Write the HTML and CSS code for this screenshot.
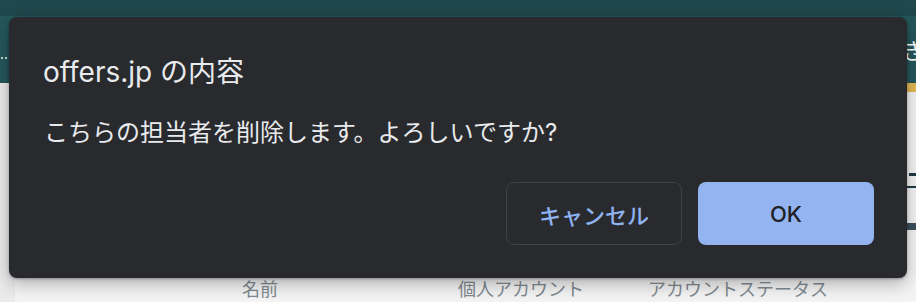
FILE: index.html
```html
<!DOCTYPE html>
<html lang="ja">
<head>
<meta charset="utf-8">
<title>offers.jp</title>
<link rel="stylesheet" href="styles.css">
</head>
<body>
<div class="page">
  <header class="topbar">
    <div class="topstrip"></div>
    <nav class="nav">
      <span class="dots"><i></i><i></i><i></i></span>
      <span class="navitem">き</span>
    </nav>
  </header>
  <div class="accent-row"><div class="gold"></div></div>
  <main class="content">
    <div class="card">
      <div class="heading-row">
        <span class="heading-mark"></span>
      </div>
      <div class="action-row"><span class="action-btn"></span></div>
      <div class="table-head">
        <span class="col col-name">名前</span>
        <span class="col col-account">個人アカウント</span>
        <span class="col col-status">アカウントステータス</span>
      </div>
    </div>
  </main>
</div>

<div class="dialog" role="dialog">
  <h1 class="dialog-title">offers.jp の内容</h1>
  <p class="dialog-message">こちらの担当者を削除します。よろしいですか?</p>
  <div class="dialog-actions">
    <button class="btn btn-cancel">キャンセル</button>
    <button class="btn btn-ok">OK</button>
  </div>
</div>
</body>
</html>
```

FILE: styles.css
```css
html, body {
  margin: 0;
  padding: 0;
}
body {
  width: 916px;
  height: 302px;
  overflow: hidden;
  background: #ebebeb;
  font-family: "Inter", "Noto Sans CJK JP", sans-serif;
}
.page {
  display: flex;
  flex-direction: column;
  height: 302px;
}
.topbar {
  display: flex;
  flex-direction: column;
  height: 90px;
  background: #24575b;
}
.topstrip {
  height: 16px;
  background: #1f484c;
}
.nav {
  flex: 1;
  display: flex;
  align-items: center;
  justify-content: space-between;
}
.dots {
  display: flex;
  gap: 2px;
  margin-left: -3px;
  margin-top: 18px;
}
.dots i {
  width: 2px;
  height: 2px;
  border-radius: 50%;
  background: #ffffff;
}
.navitem {
  color: #ffffff;
  font-size: 22px;
  line-height: 24px;
  margin-right: -8px;
  margin-top: 4px;
}
.accent-row {
  display: flex;
  justify-content: flex-end;
  height: 10px;
}
.gold {
  width: 80px;
  background: #e3b955;
}
.content {
  flex: 1;
  display: flex;
  padding-left: 15px;
}
.card {
  flex: 1;
  background: #f4f4f4;
  display: flex;
  flex-direction: column;
  padding-top: 81px;
}
.heading-row {
  display: flex;
  justify-content: flex-end;
  height: 13px;
  border-bottom: 2px solid #1e3a47;
}
.heading-mark {
  width: 7px;
  height: 3px;
  background: #1e3a47;
}
.action-row {
  display: flex;
  justify-content: flex-end;
  margin-top: 35px;
}
.action-btn {
  width: 120px;
  height: 7px;
  background: #3c505c;
  margin-right: -110px;
}
.table-head {
  display: flex;
  margin-top: 48px;
  padding-left: 227px;
  font-size: 18px;
  color: #7f898f;
  line-height: 24px;
}
.col-name { width: 216px; }
.col-account { width: 190px; }

.dialog {
  position: absolute;
  left: 9px;
  top: 17px;
  width: 898px;
  height: 261px;
  box-sizing: border-box;
  background: #292a2d;
  border-radius: 8px;
  box-shadow: 0 6px 18px rgba(0, 0, 0, 0.28), 0 1px 3px rgba(0, 0, 0, 0.3);
  padding: 39px 33px 0 34px;
  display: flex;
  flex-direction: column;
  color: #e8eaed;
}
.dialog-title {
  margin: 0;
  font-size: 28px;
  font-weight: 400;
  line-height: 32px;
}
.dialog-message {
  margin: 29px 0 0 1px;
  font-size: 24px;
  line-height: 32px;
}
.dialog-actions {
  display: flex;
  justify-content: flex-end;
  gap: 16px;
  margin-top: 33px;
}
.btn {
  width: 176px;
  height: 63px;
  border-radius: 8px;
  font-family: "Inter", "Noto Sans CJK JP", sans-serif;
  font-size: 22px;
  font-weight: 500;
  cursor: pointer;
}
.btn-cancel {
  background: #292a2d;
  border: 1px solid #3f4145;
  color: #8fb2f1;
}
.btn-ok {
  background: #93b4f1;
  border: none;
  color: #202124;
}
```
